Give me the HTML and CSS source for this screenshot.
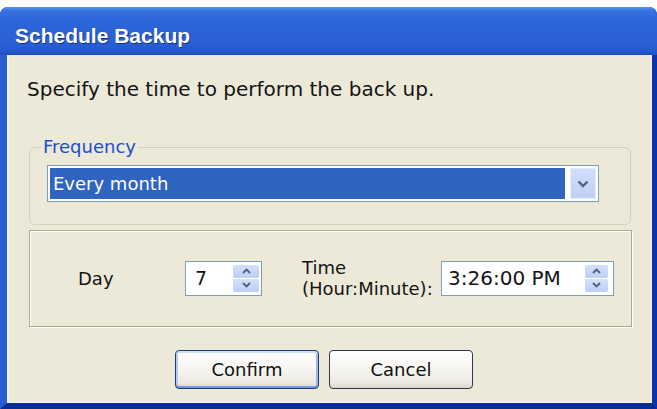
FILE: index.html
```html
<!DOCTYPE html>
<html>
<head>
<meta charset="utf-8">
<link rel="stylesheet" href="styles.css">
</head>
<body>
<div class="window">
  <div class="titlebar"><span class="title">Schedule Backup</span></div>
  <div class="client">
    <p class="intro">Specify the time to perform the back up.</p>
    <fieldset class="group">
      <legend class="legend">Frequency</legend>
      <div class="combo">
        <div class="combo-value">Every month</div>
        <div class="combo-btn">
          <svg class="chev-lg" viewBox="0 0 12 8" width="12" height="8"><path d="M1.5 1.5 L6 6 L10.5 1.5" fill="none" stroke="#4D6185" stroke-width="2.4"/></svg>
        </div>
      </div>
    </fieldset>
    <div class="panel">
      <span class="lbl-day">Day</span>
      <div class="spinbox spin-day">
        <span class="spin-text">7</span>
        <div class="spin">
          <div class="spin-half"><svg viewBox="0 0 9 6" width="9" height="6"><path d="M1 5 L4.5 1.5 L8 5" fill="none" stroke="#4D6185" stroke-width="1.8"/></svg></div>
          <div class="spin-half"><svg viewBox="0 0 9 6" width="9" height="6"><path d="M1 1 L4.5 4.5 L8 1" fill="none" stroke="#4D6185" stroke-width="1.8"/></svg></div>
        </div>
      </div>
      <span class="lbl-time">Time<br>(Hour:Minute):</span>
      <div class="spinbox spin-time">
        <span class="spin-text time-text">3:26:00 PM</span>
        <div class="spin spin-sm">
          <div class="spin-half"><svg viewBox="0 0 9 6" width="9" height="6"><path d="M1 5 L4.5 1.5 L8 5" fill="none" stroke="#4D6185" stroke-width="1.8"/></svg></div>
          <div class="spin-half"><svg viewBox="0 0 9 6" width="9" height="6"><path d="M1 1 L4.5 4.5 L8 1" fill="none" stroke="#4D6185" stroke-width="1.8"/></svg></div>
        </div>
      </div>
    </div>
    <div class="buttons">
      <button class="btn btn-default">Confirm</button>
      <button class="btn">Cancel</button>
    </div>
  </div>
</div>
</body>
</html>
```
FILE: styles.css
```css
html, body {
  margin: 0;
  padding: 0;
  background: #ffffff;
}

body {
  font-family: "DejaVu Sans", sans-serif;
  font-size: 18px;
  color: #141414;
}

.window {
  width: 657px;
  height: 402px;
  margin-top: 7px;
  display: flex;
  flex-direction: column;
  border-radius: 8px 8px 0 0;
  overflow: hidden;
  background: #0A2C98;
}

.titlebar {
  height: 48px;
  flex: none;
  box-sizing: border-box;
  display: flex;
  align-items: center;
  padding: 9px 0 0 15px;
  background: linear-gradient(180deg, #5A94F0 0%, #3570E0 8%, #2C65D9 30%, #2A61D5 70%, #2459CE 92%, #1C4DC0 100%);
}

.title {
  font-family: "Liberation Sans", Arial, sans-serif;
  font-weight: bold;
  font-size: 21px;
  color: #ffffff;
  text-shadow: 1px 1px 0 #12348F;
}

.client {
  flex: 1;
  display: flex;
  flex-direction: column;
  background: #ECE9D8;
  border-style: solid;
  border-width: 0 5px 6px 7px;
  border-color: #2453C9 #0C33A8 #0A2C95 #2B5ED0;
  box-shadow: inset 2px 0 0 #F4F3EC, inset -1px 0 0 #F4F3EC, inset 0 -1px 0 #F4F3EC;
}

.intro {
  margin: 23px 0 0 20px;
  font-size: 20px;
  line-height: 22px;
}

.group {
  margin: 36px 21px 0 22px;
  padding: 7px 31px 22px 11px;
  border: 1px solid #D0D0BF;
  border-radius: 6px;
  min-inline-size: 0;
}

.legend {
  padding: 0 2px;
  color: #1A4FCF;
  font-size: 18px;
  line-height: 22px;
}

.combo {
  margin-left: 6px;
  height: 37px;
  box-sizing: border-box;
  border: 1px solid #7F9DB9;
  background: #ffffff;
  padding: 2px;
  display: flex;
  gap: 5px;
}

.combo-value {
  flex: 1;
  display: flex;
  align-items: center;
  padding-left: 3px;
  background: #3064C2;
  color: #ffffff;
  font-size: 18px;
}

.combo-btn {
  width: 26px;
  display: flex;
  align-items: center;
  justify-content: center;
  border-radius: 2px;
  background: linear-gradient(180deg, #D2DEFB, #BFCFF5);
  box-shadow: inset 0 0 0 1px #E3EBFC;
}

.panel {
  margin: 5px 20px 0 22px;
  border: 1px solid #ACA899;
  box-shadow: inset 1px 1px 0 #ffffff, 1px 1px 0 #ffffff;
  display: flex;
  align-items: center;
  padding: 26px 0 27px 48px;
}

.lbl-day {
  width: 107px;
  flex: none;
}

.lbl-time {
  margin-left: 40px;
  width: 139px;
  flex: none;
  line-height: 21px;
}

.spinbox {
  height: 35px;
  box-sizing: border-box;
  border: 1px solid #7F9DB9;
  background: #ffffff;
  display: flex;
  align-items: center;
  flex: none;
}

.spin-day {
  width: 77px;
  padding: 0 2px 0 9px;
}

.spin-time {
  width: 173px;
  padding: 0 5px 0 6px;
}

.spin-text {
  flex: 1;
  font-size: 19px;
}

.time-text {
  font-size: 20px;
}

.spin {
  width: 26px;
  height: 27px;
  display: flex;
  flex-direction: column;
  gap: 1px;
}

.spin-sm {
  width: 23px;
}

.spin-half {
  flex: 1;
  display: flex;
  align-items: center;
  justify-content: center;
  border-radius: 2px;
  background: linear-gradient(180deg, #D3DFFB, #BDCEF5);
}

.buttons {
  display: flex;
  justify-content: center;
  gap: 10px;
  margin-top: 23px;
  padding-right: 11px;
}

.btn {
  width: 144px;
  height: 39px;
  font-family: "DejaVu Sans", sans-serif;
  font-size: 18px;
  color: #111;
  border: 1px solid #2C3A4E;
  border-radius: 4px;
  background: linear-gradient(180deg, #FFFFFF 0%, #F6F5F1 50%, #ECEAE3 85%, #D9D4C9 100%);
  padding: 0;
}

.btn-default {
  border-color: #1F3C6E;
  box-shadow: inset 0 2px 0 #CDE0FB, inset 0 -2px 0 #7C98E4, inset 2px 0 0 #B4CBF4, inset -2px 0 0 #9DB4EE;
}
```
